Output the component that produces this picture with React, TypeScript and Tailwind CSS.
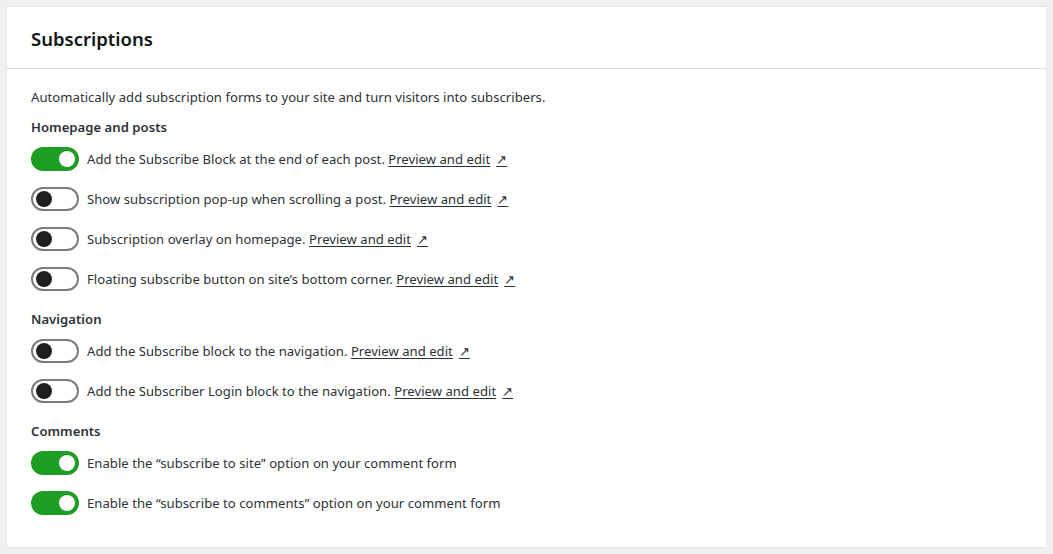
import React from "react";

type Row = { label: string; on: boolean; link?: boolean };

const groups: { title: string; rows: Row[] }[] = [
  {
    title: "Homepage and posts",
    rows: [
      { label: "Add the Subscribe Block at the end of each post.", on: true, link: true },
      { label: "Show subscription pop-up when scrolling a post.", on: false, link: true },
      { label: "Subscription overlay on homepage.", on: false, link: true },
      { label: "Floating subscribe button on site\u2019s bottom corner.", on: false, link: true },
    ],
  },
  {
    title: "Navigation",
    rows: [
      { label: "Add the Subscribe block to the navigation.", on: false, link: true },
      { label: "Add the Subscriber Login block to the navigation.", on: false, link: true },
    ],
  },
  {
    title: "Comments",
    rows: [
      { label: "Enable the \u201csubscribe to site\u201d option on your comment form", on: true },
      { label: "Enable the \u201csubscribe to comments\u201d option on your comment form", on: true },
    ],
  },
];

function Toggle({ on }: { on: boolean }) {
  if (on) {
    return (
      <div className="flex h-6 w-12 shrink-0 items-center justify-end rounded-full bg-[#1d9e22] pr-[4px]">
        <div className="h-4 w-4 rounded-full bg-white" />
      </div>
    );
  }
  return (
    <div className="flex h-6 w-12 shrink-0 items-center justify-start rounded-full border-2 border-[#7a7a7a] bg-white pl-[3px]">
      <div className="h-4 w-4 rounded-full bg-[#1e1e1e]" />
    </div>
  );
}

export default function App() {
  return (
    <div
      className="min-h-[554px] w-full bg-[#f0f0f0] p-[7px]"
      style={{ fontFamily: '"Noto Sans", "Open Sans", sans-serif' }}
    >
      <div className="h-[540px] w-full bg-white shadow-[0_0_0_1px_rgba(0,0,0,0.03)]">
        <div className="flex h-[62px] items-center border-b border-[#dcdcde] px-6 pt-[2px]">
          <h1 className="text-[18.5px] font-semibold text-[#101517]">Subscriptions</h1>
        </div>
        <div className="px-6 pt-[18px] text-[13.1px] tracking-[0.03px] text-[#2c3338]">
          <p className="leading-5">
            Automatically add subscription forms to your site and turn visitors into subscribers.
          </p>
          {groups.map((g, gi) => (
            <div key={g.title} className={gi === 0 ? "mt-[10px]" : "mt-[18px]"}>
              <h2 className="leading-5 font-semibold text-[#2c3338]">{g.title}</h2>
              <div className="mt-[10px] flex flex-col gap-4">
                {g.rows.map((r) => (
                  <div key={r.label} className="flex h-6 items-center gap-2">
                    <Toggle on={r.on} />
                    <span className="leading-5">
                      {r.label}
                      {r.link && (
                        <>
                          {" "}
                          <a href="#" className="underline underline-offset-2">
                            Preview and edit
                          </a>
                          <span className="ml-[6px] underline underline-offset-2 text-[13px] font-light">{"\u2197"}</span>
                        </>
                      )}
                    </span>
                  </div>
                ))}
              </div>
            </div>
          ))}
        </div>
      </div>
    </div>
  );
}
